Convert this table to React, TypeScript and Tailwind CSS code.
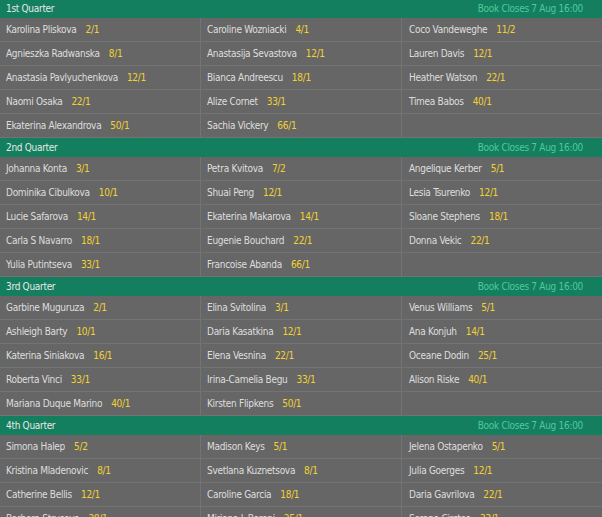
import React from "react";

type Entry = [string, string] | null;
type Section = { title: string; rows: Entry[][] };

const sections: Section[] = [
  {
    title: "1st Quarter",
    rows: [
      [["Karolina Pliskova", "2/1"], ["Caroline Wozniacki", "4/1"], ["Coco Vandeweghe", "11/2"]],
      [["Agnieszka Radwanska", "8/1"], ["Anastasija Sevastova", "12/1"], ["Lauren Davis", "12/1"]],
      [["Anastasia Pavlyuchenkova", "12/1"], ["Bianca Andreescu", "18/1"], ["Heather Watson", "22/1"]],
      [["Naomi Osaka", "22/1"], ["Alize Cornet", "33/1"], ["Timea Babos", "40/1"]],
      [["Ekaterina Alexandrova", "50/1"], ["Sachia Vickery", "66/1"], null],
    ],
  },
  {
    title: "2nd Quarter",
    rows: [
      [["Johanna Konta", "3/1"], ["Petra Kvitova", "7/2"], ["Angelique Kerber", "5/1"]],
      [["Dominika Cibulkova", "10/1"], ["Shuai Peng", "12/1"], ["Lesia Tsurenko", "12/1"]],
      [["Lucie Safarova", "14/1"], ["Ekaterina Makarova", "14/1"], ["Sloane Stephens", "18/1"]],
      [["Carla S Navarro", "18/1"], ["Eugenie Bouchard", "22/1"], ["Donna Vekic", "22/1"]],
      [["Yulia Putintseva", "33/1"], ["Francoise Abanda", "66/1"], null],
    ],
  },
  {
    title: "3rd Quarter",
    rows: [
      [["Garbine Muguruza", "2/1"], ["Elina Svitolina", "3/1"], ["Venus Williams", "5/1"]],
      [["Ashleigh Barty", "10/1"], ["Daria Kasatkina", "12/1"], ["Ana Konjuh", "14/1"]],
      [["Katerina Siniakova", "16/1"], ["Elena Vesnina", "22/1"], ["Oceane Dodin", "25/1"]],
      [["Roberta Vinci", "33/1"], ["Irina-Camelia Begu", "33/1"], ["Alison Riske", "40/1"]],
      [["Mariana Duque Marino", "40/1"], ["Kirsten Flipkens", "50/1"], null],
    ],
  },
  {
    title: "4th Quarter",
    rows: [
      [["Simona Halep", "5/2"], ["Madison Keys", "5/1"], ["Jelena Ostapenko", "5/1"]],
      [["Kristina Mladenovic", "8/1"], ["Svetlana Kuznetsova", "8/1"], ["Julia Goerges", "12/1"]],
      [["Catherine Bellis", "12/1"], ["Caroline Garcia", "18/1"], ["Daria Gavrilova", "22/1"]],
      [["Barbora Strycova", "28/1"], ["Mirjana L-Baroni", "25/1"], ["Sorana Cirstea", "33/1"]],
      [["Magda Linette", "50/1"], ["Lucie Hradecka", "66/1"], null],
    ],
  },
];

function Cell({ entry, last }: { entry: Entry; last: boolean }) {
  return (
    <div
      className={
        "flex h-[24px] items-center border-b border-[#737373] " +
        (last ? "pl-[7px]" : "border-r pl-[6px]")
      }
    >
      {entry && (
        <>
          <span className="text-[#dedede]">{entry[0]}</span>
          <span className="ml-[9px] text-[#f2d230]">{entry[1]}</span>
        </>
      )}
    </div>
  );
}

export default function App() {
  return (
    <div
      className="w-[602px] h-[517px] overflow-hidden bg-[#666666] text-[10px] leading-none tracking-[-0.3px]"
      style={{ fontFamily: '"DejaVu Sans Condensed", "DejaVu Sans", sans-serif' }}
    >
      {sections.map((s, i) => (
        <div key={s.title}>
          <div
            className={
              "flex items-center justify-between bg-[#137f5e] pl-[6px] pr-[19px] " +
              (i === 0 ? "h-[18px]" : "h-[19px]")
            }
          >
            <span className="text-[#e8e8e8]">{s.title}</span>
            <span className="text-[#4fc99d]">Book Closes 7 Aug 16:00</span>
          </div>
          <div className="grid grid-cols-[201px_201px_200px]">
            {s.rows.map((row, r) =>
              row.map((e, c) => <Cell key={r + "-" + c} entry={e} last={c === 2} />)
            )}
          </div>
        </div>
      ))}
    </div>
  );
}
